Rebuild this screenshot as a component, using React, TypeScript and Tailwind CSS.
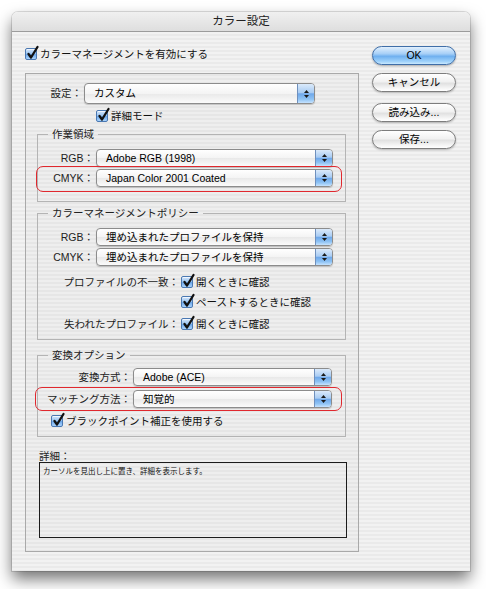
import type { ReactNode } from 'react';

function Check() {
  return (
    <span className="relative inline-block h-[12px] w-[12px] shrink-0 rounded-[2px] border border-[#4a78b2] bg-[linear-gradient(to_bottom,#d4e6fb,#9cc5f1_45%,#6aa6ea_52%,#a9d3fd)] shadow-[inset_0_1px_0_rgba(255,255,255,0.7)]">
      <svg className="absolute left-[0px] top-[-4px]" width="14" height="15" viewBox="0 0 14 15">
        <path d="M2.5 9 L5 12.5 L11.5 2" fill="none" stroke="#111" strokeWidth="2.3" strokeLinecap="round" strokeLinejoin="round" />
      </svg>
    </span>
  );
}

function Arrows() {
  return (
    <span className="flex w-[17px] flex-col items-center justify-center gap-[2px] rounded-r-[3px] border-l border-[#6f90bd] bg-[linear-gradient(to_bottom,#dbeafb,#a9ccf3_45%,#6fa8ea_52%,#8fc3f4_80%,#c6e3ff)]">
      <svg width="5" height="3" viewBox="0 0 5 3">
        <path d="M2.5 0 L5 3 L0 3 Z" fill="#1a1a1a" />
      </svg>
      <svg width="5" height="3" viewBox="0 0 5 3">
        <path d="M0 0 L5 0 L2.5 3 Z" fill="#1a1a1a" />
      </svg>
    </span>
  );
}

function Popup({ value, className }: { value: string; className: string }) {
  return (
    <div
      className={`flex items-stretch rounded-[4px] border border-[#8c8c8c] bg-[linear-gradient(to_bottom,#ffffff,#f4f4f4_50%,#e9e9e9_52%,#fbfbfb)] shadow-[0_1px_1px_rgba(0,0,0,0.18)] ${className}`}
    >
      <span className="flex flex-1 items-center pl-[9px] text-[10.5px] leading-none text-black">{value}</span>
      <Arrows />
    </div>
  );
}

function PopupRow({
  label,
  value,
  labelW,
  popupW,
  mark,
  className = '',
}: {
  label: string;
  value: string;
  labelW: string;
  popupW: string;
  mark?: ReactNode;
  className?: string;
}) {
  return (
    <div className={`relative flex h-[18px] items-center gap-[2px] ${className}`}>
      <span className={`shrink-0 text-right text-[10.5px] leading-none text-[#222] ${labelW}`}>{label}</span>
      <Popup value={value} className={`h-[18px] ${popupW}`} />
      {mark}
    </div>
  );
}

function CheckRow({ label, text, className = '' }: { label: string; text: string; className?: string }) {
  return (
    <div className={`flex h-[20px] items-center ${className}`}>
      <span className="w-[141px] shrink-0 text-right text-[10.5px] leading-none text-[#222]">{label}</span>
      <span className="ml-[2px] flex items-center gap-[3px]">
        <Check />
        <span className="text-[10.5px] leading-none text-[#111]">{text}</span>
      </span>
    </div>
  );
}

function Group({ title, className = '', children }: { title: string; className?: string; children: ReactNode }) {
  return (
    <fieldset className={`ml-[11px] mr-[12px] border border-[#b4b4b4] ${className}`}>
      <legend className="ml-[10px] px-[4px] text-[10.5px] leading-[14px] text-[#222]">{title}</legend>
      {children}
    </fieldset>
  );
}

function Button({ label, primary }: { label: string; primary?: boolean }) {
  if (primary) {
    return (
      <div className="flex h-[19px] w-[84px] items-center justify-center rounded-full border border-[#3f6ea8] bg-[linear-gradient(to_bottom,#e2f0fd,#a6cff7_40%,#6fb0ef_55%,#9fd2fb_85%,#c8e8ff)] text-[10.5px] leading-none text-black shadow-[0_1px_2px_rgba(0,0,0,0.3)]">
        {label}
      </div>
    );
  }
  return (
    <div className="flex h-[19px] w-[84px] items-center justify-center rounded-full border border-[#7d7d7d] bg-[linear-gradient(to_bottom,#ffffff,#f1f1f1_45%,#e1e1e1_55%,#f6f6f6_85%,#ffffff)] text-[10.5px] leading-none text-black shadow-[0_1px_2px_rgba(0,0,0,0.25)]">
      {label}
    </div>
  );
}

function RedMark({ className }: { className: string }) {
  return <span className={`pointer-events-none absolute rounded-[7px] border-[1.5px] border-[#e0282e] ${className}`} />;
}

export default function App() {
  return (
    <div className="min-h-[589px] w-[486px] bg-white pl-[12px] pt-[12px] font-['Liberation_Sans','Noto_Sans_CJK_JP',sans-serif]">
      <div className="flex h-[559px] w-[458px] flex-col overflow-hidden rounded-t-[6px] bg-[repeating-linear-gradient(to_bottom,#f2f2f2_0px,#f2f2f2_2px,#eaeaea_2px,#eaeaea_4px)] shadow-[0_0_0_1px_rgba(0,0,0,0.12),0_8px_16px_rgba(0,0,0,0.55)]">
        <div className="flex h-[20px] shrink-0 items-center justify-center border-b border-[#9c9c9c] bg-[linear-gradient(to_bottom,#f0f0f0,#dedede)] text-[11.5px] leading-none text-[#222]">
          カラー設定
        </div>

        <div className="flex pl-[13px] pt-[14px]">
          <div className="w-[334px]">
            <div className="flex h-[16px] items-center gap-[3px]">
              <Check />
              <span className="text-[10.5px] leading-none text-[#111]">カラーマネージメントを有効にする</span>
            </div>

            <div className="mt-[11px] h-[479px] border border-[#a9a9a9] bg-black/[0.015]">
              <div className="mt-[9px] flex h-[21px] items-center gap-[2px]">
                <span className="w-[56px] shrink-0 text-right text-[10.5px] leading-none text-[#222]">設定：</span>
                <Popup value="カスタム" className="h-[21px] w-[231px]" />
              </div>
              <div className="ml-[70px] mt-[4px] flex h-[16px] items-center gap-[3px]">
                <Check />
                <span className="text-[10.5px] leading-none text-[#111]">詳細モード</span>
              </div>

              <Group title="作業領域" className="mt-[3px]">
                <div className="flex flex-col gap-[2px] pb-[14px] pt-[8px]">
                  <PopupRow label="RGB：" value="Adobe RGB (1998)" labelW="w-[56px]" popupW="w-[237px]" />
                  <PopupRow
                    label="CMYK："
                    value="Japan Color 2001 Coated"
                    labelW="w-[56px]"
                    popupW="w-[237px]"
                    mark={<RedMark className="-bottom-[5px] -left-[2px] -top-[3px] right-[3px]" />}
                  />
                </div>
              </Group>

              <Group title="カラーマネージメントポリシー" className="mt-[4px]">
                <div className="pb-[5px] pt-[8px]">
                  <div className="flex flex-col gap-[2px]">
                    <PopupRow label="RGB：" value="埋め込まれたプロファイルを保持" labelW="w-[56px]" popupW="w-[237px]" />
                    <PopupRow label="CMYK：" value="埋め込まれたプロファイルを保持" labelW="w-[56px]" popupW="w-[237px]" />
                  </div>
                  <CheckRow label="プロファイルの不一致：" text="開くときに確認" className="mt-[6px]" />
                  <CheckRow label="" text="ペーストするときに確認" />
                  <CheckRow label="失われたプロファイル：" text="開くときに確認" className="mt-[2px]" />
                </div>
              </Group>

              <Group title="変換オプション" className="mt-[8px]">
                <div className="pb-[7px] pt-[6px]">
                  <PopupRow label="変換方式：" value="Adobe (ACE)" labelW="w-[93px]" popupW="w-[199px]" />
                  <PopupRow
                    label="マッチング方法："
                    value="知覚的"
                    labelW="w-[93px]"
                    popupW="w-[199px]"
                    className="mt-[4px]"
                    mark={<RedMark className="-bottom-[3px] -left-[3px] -top-[3px] right-[3px]" />}
                  />
                  <div className="ml-[13px] mt-[5px] flex h-[16px] items-center gap-[3px]">
                    <Check />
                    <span className="text-[10.5px] leading-none text-[#111]">ブラックポイント補正を使用する</span>
                  </div>
                </div>
              </Group>

              <div className="ml-[13px] mt-[13px] flex h-[12px] items-center text-[10.5px] leading-none text-[#222]">
                詳細：
              </div>
              <div className="ml-[13px] h-[76px] w-[308px] border border-[#1c1c1c] px-[3px] pt-[4px] text-[7.5px] leading-[10px] text-[#111]">
                カーソルを見出し上に置き、詳細を表示します。
              </div>
            </div>
          </div>

          <div className="ml-[13px] flex w-[84px] flex-col">
            <Button label="OK" primary />
            <div className="mt-[8px]">
              <Button label="キャンセル" />
            </div>
            <div className="mt-[11px]">
              <Button label="読み込み..." />
            </div>
            <div className="mt-[8px]">
              <Button label="保存..." />
            </div>
          </div>
        </div>
      </div>
    </div>
  );
}
